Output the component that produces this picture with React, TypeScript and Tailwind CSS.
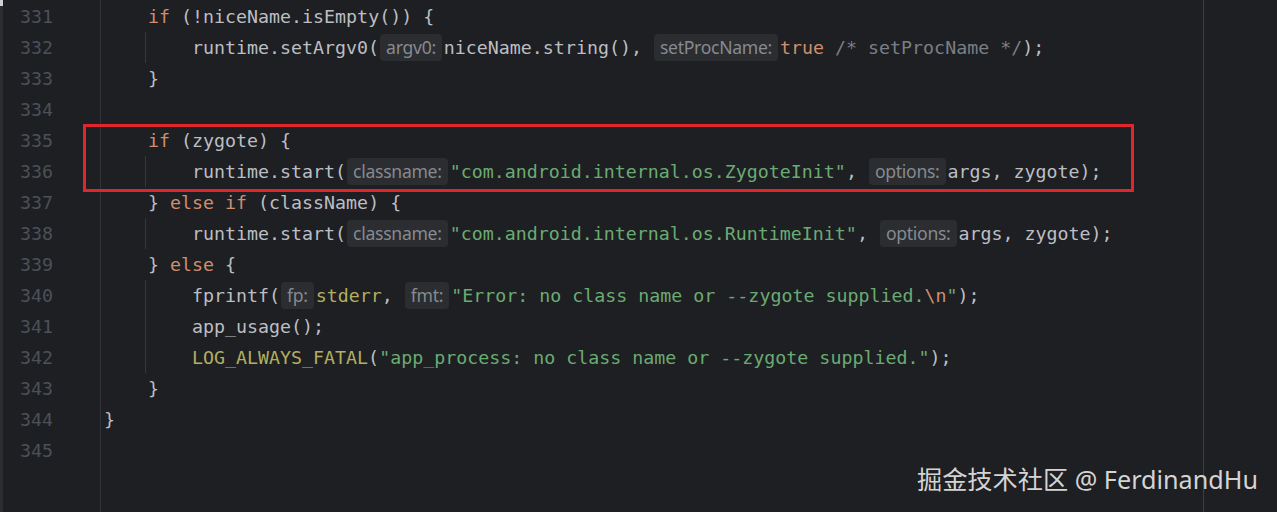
type Tok = [string, string];

type Line = {
  no: number;
  level: number;
  guide?: boolean;
  toks: Tok[];
};

const tokClass: Record<string, string> = {
  t: "text-[#bcbec4]",
  k: "text-[#cf8e6d]",
  s: "text-[#6aab73]",
  c: "text-[#7a7e85]",
  m: "text-[#b3ae60]",
  e: "text-[#cf8e6d]",
};

const lines: Line[] = [
  { no: 331, level: 1, toks: [["k", "if"], ["t", " (!niceName.isEmpty()) {"]] },
  {
    no: 332,
    level: 2,
    guide: true,
    toks: [
      ["t", "runtime.setArgv0("],
      ["h", "argv0:"],
      ["t", "niceName.string(), "],
      ["h", "setProcName:"],
      ["k", "true"],
      ["c", " /* setProcName */"],
      ["t", ");"],
    ],
  },
  { no: 333, level: 1, toks: [["t", "}"]] },
  { no: 334, level: 0, toks: [] },
  { no: 335, level: 1, toks: [["k", "if"], ["t", " (zygote) {"]] },
  {
    no: 336,
    level: 2,
    guide: true,
    toks: [
      ["t", "runtime.start("],
      ["h", "classname:"],
      ["s", "\"com.android.internal.os.ZygoteInit\""],
      ["t", ", "],
      ["h", "options:"],
      ["t", "args, zygote);"],
    ],
  },
  { no: 337, level: 1, toks: [["t", "} "], ["k", "else if"], ["t", " (className) {"]] },
  {
    no: 338,
    level: 2,
    guide: true,
    toks: [
      ["t", "runtime.start("],
      ["h", "classname:"],
      ["s", "\"com.android.internal.os.RuntimeInit\""],
      ["t", ", "],
      ["h", "options:"],
      ["t", "args, zygote);"],
    ],
  },
  { no: 339, level: 1, toks: [["t", "} "], ["k", "else"], ["t", " {"]] },
  {
    no: 340,
    level: 2,
    guide: true,
    toks: [
      ["t", "fprintf("],
      ["h", "fp:"],
      ["m", "stderr"],
      ["t", ", "],
      ["h", "fmt:"],
      ["s", "\"Error: no class name or --zygote supplied."],
      ["e", "\\n"],
      ["s", "\""],
      ["t", ");"],
    ],
  },
  { no: 341, level: 2, guide: true, toks: [["t", "app_usage();"]] },
  {
    no: 342,
    level: 2,
    guide: true,
    toks: [
      ["m", "LOG_ALWAYS_FATAL"],
      ["t", "("],
      ["s", "\"app_process: no class name or --zygote supplied.\""],
      ["t", ");"],
    ],
  },
  { no: 343, level: 1, toks: [["t", "}"]] },
  { no: 344, level: 0, toks: [["t", "}"]] },
  { no: 345, level: 0, toks: [] },
];

const Hint = ({ label }: { label: string }) => (
  <span className="ml-[1px] mr-[2px] h-[27px] px-[6px] flex items-center rounded-[4px] bg-[#2b2d30] text-[#868a91] text-[17.6px] font-['Noto_Sans',sans-serif] tracking-[-0.3px]">
    {label}
  </span>
);

const CodeLine = ({ line }: { line: Line }) => (
  <div className="h-[31px] flex items-center whitespace-pre">
    {line.level >= 1 && <span className="w-[44px] h-[31px] shrink-0" />}
    {line.level >= 2 && (
      <span
        className={
          line.guide
            ? "w-[47px] -ml-[3px] h-[31px] shrink-0 border-l border-[#35373c]"
            : "w-[44px] h-[31px] shrink-0"
        }
      />
    )}
    {line.toks.map(([type, text], i) =>
      type === "h" ? (
        <Hint key={i} label={text} />
      ) : (
        <span key={i} className={tokClass[type]}>
          {text}
        </span>
      )
    )}
  </div>
);

export default function App() {
  return (
    <div className="relative w-full h-[512px] overflow-hidden bg-[#1e1f22] flex font-['DejaVu_Sans_Mono',monospace] text-[18.3px]">
      {/* bordinha esquerda */}
      <div className="w-[3px] shrink-0 bg-[#2b2d30] relative">
        <div className="absolute left-0 top-0 w-[3px] h-[6px] bg-[#cfd0d2]" />
      </div>

      {/* numeros de linha */}
      <div className="w-[98px] shrink-0 border-r border-[#313438] pt-[1px]">
        {lines.map((l) => (
          <div key={l.no} className="h-[31px] flex items-center justify-end pr-[47px] text-[#4b5059]">
            {l.no}
          </div>
        ))}
      </div>

      {/* codigo */}
      <div className="flex flex-1">
        <div className="w-[1102px] shrink-0 pl-[3px] pt-[1px]">
          {lines.map((l) => (
            <CodeLine key={l.no} line={l} />
          ))}
        </div>
        <div className="flex-1 border-l border-[#3c3e43] bg-[#1e1f22]" />
      </div>

      {/* destaque vermelho */}
      <div className="absolute left-[83px] top-[124px] w-[1051px] h-[68px] border-[3px] border-[#e1262b]" />

      {/* marca d'agua */}
      <div className="absolute right-[19px] top-[467px] text-[25.2px] leading-none text-[#d4d4d4] font-['Noto_Sans','Noto_Sans_CJK_SC',sans-serif] whitespace-nowrap">
        掘金技术社区 @ FerdinandHu
      </div>
    </div>
  );
}
